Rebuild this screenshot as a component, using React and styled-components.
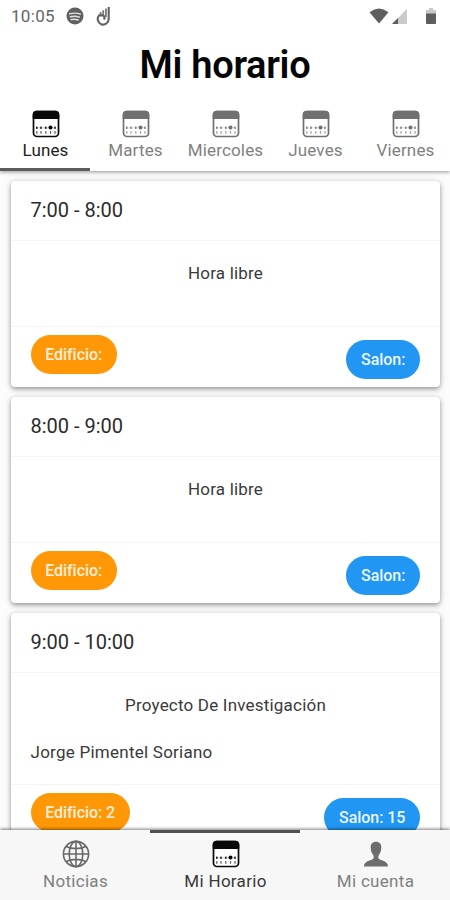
import React from 'react';
import styled, { createGlobalStyle } from 'styled-components';

const GlobalStyle = createGlobalStyle`
  * { box-sizing: border-box; }
  body { margin: 0; background: #fff; font-family: Roboto, sans-serif; overflow: hidden; }
`;

const Screen = styled.main`
  width: 450px;
  height: 900px;
  display: flex;
  flex-direction: column;
  overflow: hidden;
  background: #fcfcfc;
`;

const Header = styled.header`
  flex: 0 0 171px;
  display: flex;
  flex-direction: column;
  background: #fff;
  box-shadow: 0 1px 4px rgba(0, 0, 0, 0.42);
  z-index: 1;
`;

const StatusBar = styled.div`
  height: 32px;
  display: flex;
  align-items: center;
  padding: 0 14px 0 11px;
  color: #646464;
`;

const Clock = styled.span`
  width: 55px;
  font-size: 17px;
  letter-spacing: 0.3px;
  line-height: 32px;
`;

const StatusIcons = styled.div`
  display: flex;
  align-items: center;
  gap: ${(p) => p.$gap}px;
  margin-left: ${(p) => (p.$end ? 'auto' : '0')};
`;

const Title = styled.h1`
  margin: 0;
  height: 66px;
  line-height: 67px;
  text-align: center;
  font-size: 38px;
  font-weight: 600;
  letter-spacing: -0.3px;
  color: #050505;
`;

const Tabs = styled.nav`
  flex: 1;
  display: grid;
  grid-template-columns: repeat(5, 90px);
`;

const Tab = styled.button`
  border: 0;
  background: none;
  padding: 12px 0 0 1px;
  font: 400 17px/20px Roboto, sans-serif;
  letter-spacing: 0.15px;
  white-space: nowrap;
  display: flex;
  flex-direction: column;
  align-items: center;
  gap: 2px;
  color: ${(p) => (p.$active ? '#1c1c1c' : '#808080')};
  border-bottom: 3px solid ${(p) => (p.$active ? '#5c5c5c' : 'transparent')};
`;

const List = styled.section`
  flex: 1;
  min-height: 0;
  overflow: hidden;
  display: flex;
  flex-direction: column;
  gap: 10px;
  padding: 10px 10px 0 11px;
`;

const Card = styled.article`
  flex: 0 0 auto;
  border-radius: 4px;
  background: #fff;
  box-shadow: 0 2px 4px rgba(0, 0, 0, 0.34), 0 1px 8px rgba(0, 0, 0, 0.13);
`;

const CardHeader = styled.h2`
  margin: 0;
  height: 60px;
  padding: 0 19.5px;
  font-size: 20px;
  font-weight: 400;
  line-height: 59px;
  color: #2b2b2b;
  border-bottom: 1px solid #f5f5f5;
`;

const CardBody = styled.div`
  height: ${(p) => (p.$tall ? 112 : 86)}px;
  padding: 21px 19.5px 0;
  border-bottom: 1px solid #f5f5f5;
  font-size: 17px;
  line-height: 22px;
  color: #3a3a3a;
`;

const Subject = styled.p`
  margin: 0 0 25px;
  text-align: center;
  letter-spacing: 0.2px;
`;

const Teacher = styled.p`
  margin: 0;
  letter-spacing: 0.25px;
`;

const CardFooter = styled.div`
  height: 60px;
  padding: 7.5px 20px 0 19.5px;
  display: flex;
  align-items: flex-start;
  justify-content: space-between;
`;

const Pill = styled.span`
  height: 39.5px;
  padding: 0 14.7px;
  border-radius: 20px;
  font-size: 16px;
  font-weight: 500;
  letter-spacing: -0.05px;
  line-height: 39px;
  white-space: nowrap;
  color: #fff0dc;
  background: #ff9706;
`;

const RoomPill = styled(Pill)`
  margin-top: 5px;
  color: #eaf5ff;
  background: #2196f3;
`;

const BottomNav = styled.nav`
  flex: 0 0 70px;
  display: grid;
  grid-template-columns: repeat(3, 150px);
  background: #f7f7f7;
  box-shadow: 0 -1px 3px rgba(0, 0, 0, 0.5);
  z-index: 1;
`;

const NavItem = styled.button`
  border: 0;
  border-top: 3px solid ${(p) => (p.$active ? '#505050' : 'transparent')};
  background: none;
  padding: 7px 0 0 1px;
  font: 400 17px/20px Roboto, sans-serif;
  letter-spacing: 0.3px;
  display: flex;
  flex-direction: column;
  align-items: center;
  gap: 3px;
  color: ${(p) => (p.$active ? '#383838' : '#808080')};
`;

const Icon = styled.svg`
  display: block;
  flex: none;
`;

const CalendarIcon = ({ dark }) => {
  const c = dark ? '#080808' : '#707070';
  return (
    <Icon width="28" height="28" viewBox="0 0 28 28">
      <rect x="1.5" y="1.5" width="25" height="25" rx="3.5" fill="#fff" stroke={c} strokeWidth="1.7" />
      <path d="M.7 9V4.5A3.8 3.8 0 0 1 4.5.8h19a3.8 3.8 0 0 1 3.8 3.7V9Z" fill={c} />
      <g fill={c}>
        {[4.8, 9, 13.8, 23].map((x) => <rect key={x} x={x - 0.7} y="16.6" width="1.4" height="2.3" />)}
        {[4.8, 9, 13.8, 18.5, 23].map((x) => <rect key={x} x={x - 0.6} y="21" width="1.2" height="2.8" opacity=".65" />)}
        <circle cx="18.5" cy="17.6" r="2" />
      </g>
      <path d="M4 17.8h20" stroke={c} strokeWidth=".6" opacity=".35" />
    </Icon>
  );
};

const GlobeIcon = () => (
  <Icon width="28" height="28" viewBox="0 0 28 28" fill="none" stroke="#686868" strokeWidth="1.6">
    <circle cx="14" cy="14" r="12.6" />
    <ellipse cx="14" cy="14" rx="6.8" ry="12.6" />
    <path d="M14 1.4v25.2M1.4 14h25.2M4 6.5q10 4.2 20 0M4 21.5q10-4.2 20 0" />
  </Icon>
);

const PersonIcon = () => (
  <Icon width="28" height="28" viewBox="0 0 28 28" fill="#6d6d6d">
    <path d="M14 1.8c-3.5 0-5.6 2.4-5.3 6 .1 3 .9 5.5 2.5 7.1.8 1 .8 3.4-.3 4.2-3.2 2-8.3 1.8-9 7.5h24.2c-.7-5.7-5.8-5.5-9-7.5-1.1-.8-1.1-3.2-.3-4.2 1.6-1.6 2.4-4.1 2.5-7.1.3-3.6-1.8-6-5.3-6Z" />
  </Icon>
);

const MusicIcon = () => (
  <Icon width="18" height="18" viewBox="0 0 18 18">
    <circle cx="9" cy="9" r="8.5" fill="#606060" />
    <path d="M3.7 6.8q5.6-1.5 10.8.3M4.4 9.8q4.7-1.2 9 .4M5 12.6q3.8-.8 7.2.4" fill="none" stroke="#e4e4e4" strokeWidth="1.4" strokeLinecap="round" />
  </Icon>
);

const HandIcon = () => (
  <Icon width="15" height="20" viewBox="0 0 15 20" fill="none" stroke="#626262">
    <path d="M12.7 1v12.2a5.5 5.5 0 1 1-9.6-3.8h4.1q1.9 1.6.9 4.2" strokeWidth="2.1" />
    <path d="M9.9 2.5v8.7M7.2 4.2v5.2M4.6 6v3.4" strokeWidth="1.8" opacity=".85" />
  </Icon>
);

const WifiIcon = () => (
  <Icon width="20" height="16" viewBox="0 0 20 16">
    <path d="M.5 4.2Q10-3 19.5 4.2L10 15.6Z" fill="#5e5e5e" />
  </Icon>
);

const SignalIcon = () => (
  <Icon width="15" height="15" viewBox="0 0 15 15">
    <path d="M0 15 15 0v15Z" fill="#cacaca" />
    <path d="M0 15 6 9v6Z" fill="#5e5e5e" />
  </Icon>
);

const BatteryIcon = () => (
  <Icon width="10" height="16" viewBox="0 0 10 16">
    <path d="M0 2h3V0h4v2h3v5H0Z" fill="#c9c9c9" />
    <path d="M0 5.5h10V15a1 1 0 0 1-1 1H1a1 1 0 0 1-1-1Z" fill="#5e5e5e" />
  </Icon>
);

const BatterySlot = styled.span`
  margin-left: 16px;
`;

const days = ['Lunes', 'Martes', 'Miercoles', 'Jueves', 'Viernes'];

const classes = [
  { time: '7:00 - 8:00', subject: 'Hora libre', building: 'Edificio:', room: 'Salon:' },
  { time: '8:00 - 9:00', subject: 'Hora libre', building: 'Edificio:', room: 'Salon:' },
  { time: '9:00 - 10:00', subject: 'Proyecto De Investigación', teacher: 'Jorge Pimentel Soriano', building: 'Edificio: 2', room: 'Salon: 15' },
];

export default function App() {
  return (
    <Screen>
      <GlobalStyle />
      <Header>
        <StatusBar>
          <Clock>10:05</Clock>
          <StatusIcons $gap={12}><MusicIcon /><HandIcon /></StatusIcons>
          <StatusIcons $gap={3} $end>
            <WifiIcon /><SignalIcon /><BatterySlot><BatteryIcon /></BatterySlot>
          </StatusIcons>
        </StatusBar>
        <Title>Mi horario</Title>
        <Tabs>
          {days.map((day, i) => (
            <Tab key={day} $active={i === 0}><CalendarIcon dark={i === 0} />{day}</Tab>
          ))}
        </Tabs>
      </Header>
      <List>
        {classes.map((c) => (
          <Card key={c.time}>
            <CardHeader>{c.time}</CardHeader>
            <CardBody $tall={Boolean(c.teacher)}>
              <Subject>{c.subject}</Subject>
              {c.teacher && <Teacher>{c.teacher}</Teacher>}
            </CardBody>
            <CardFooter><Pill>{c.building}</Pill><RoomPill>{c.room}</RoomPill></CardFooter>
          </Card>
        ))}
      </List>
      <BottomNav>
        <NavItem><GlobeIcon />Noticias</NavItem>
        <NavItem $active><CalendarIcon dark />Mi Horario</NavItem>
        <NavItem><PersonIcon />Mi cuenta</NavItem>
      </BottomNav>
    </Screen>
  );
}
